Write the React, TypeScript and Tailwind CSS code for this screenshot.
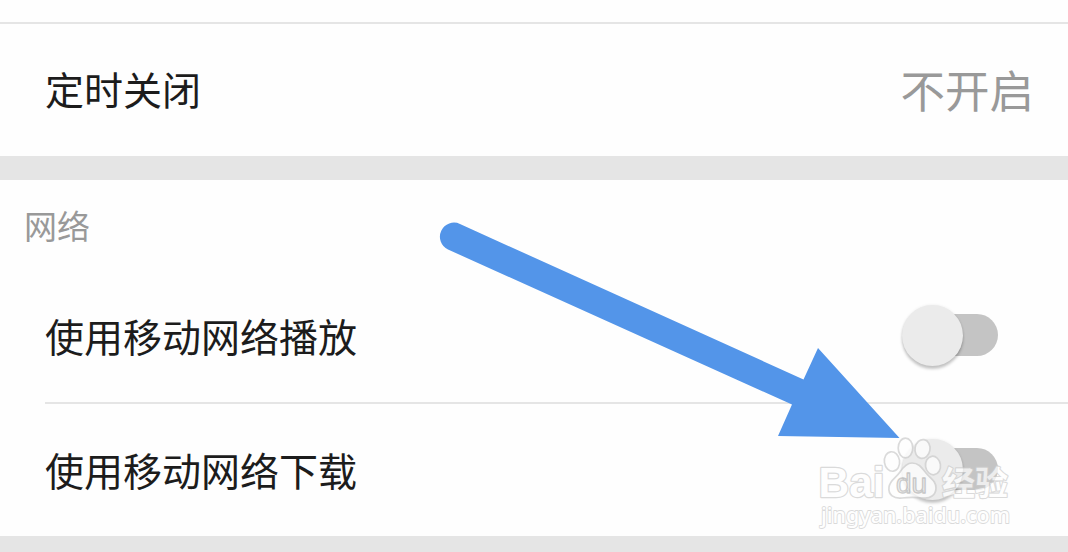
const Toggle = () => {
  return (
    <div className="relative w-24 h-[61px] flex items-center justify-end">
      <div className="w-[84px] h-[42px] rounded-full bg-[#c4c4c4]"></div>
      <div className="absolute left-0 top-0 size-[61px] rounded-full bg-[#ebebeb] shadow-[0_3px_3px_rgba(0,0,0,0.22),0_0_3px_rgba(0,0,0,0.08)]"></div>
    </div>
  );
};

const Arrow = () => {
  return (
    <svg className="absolute left-0 top-0 pointer-events-none" width="1068" height="552" viewBox="0 0 1068 552">
      <path
        d="M460 224 L803.500 379.500 L818 348 L899.500 438 L778 436 L792 404.500 L448 249.500 A13.800 13.800 0 0 1 460 224 Z"
        fill="#5395e9"
      />
    </svg>
  );
};

const Watermark = () => {
  return (
    <svg className="absolute left-[810px] top-[430px] pointer-events-none" width="210" height="110" viewBox="810 430 210 110">
      <g opacity="0.7" strokeLinejoin="round" fill="#ffffff" stroke="#cccccc">
        <g strokeWidth="1.700">
          <ellipse cx="892" cy="461.500" rx="7.600" ry="9.800" transform="rotate(-8 892 461.500)" />
          <ellipse cx="905.500" cy="448" rx="7.300" ry="9.800" />
          <ellipse cx="922.500" cy="449" rx="7.500" ry="9.500" transform="rotate(10 922.500 449)" />
          <ellipse cx="933" cy="465.500" rx="7.500" ry="9.300" transform="rotate(-8 933 465.500)" />
          <path d="M912 463 C919 463 922 468 926 473 C931 479 936 481 936 488 C936 495 930 499 923 498 C915 497 909 497 902 498 C894 499 888 495 889 487 C890 480 896 478 900 472 C904 466 907 463 912 463 Z" />
        </g>
        <text x="818.500" y="497" paintOrder="stroke" strokeWidth="2.400" fontFamily="Liberation Sans, sans-serif" fontWeight="700" fontSize="43" textLength="66" lengthAdjust="spacingAndGlyphs">Bai</text>
        <text x="942" y="494.500" paintOrder="stroke" strokeWidth="2.200" fontFamily="'Noto Sans CJK SC', sans-serif" fontWeight="700" fontSize="33" textLength="66" lengthAdjust="spacingAndGlyphs">经验</text>
        <text x="821" y="522.500" paintOrder="stroke" strokeWidth="1.800" fontFamily="'Noto Sans', sans-serif" fontWeight="500" fontSize="22.500" textLength="189" lengthAdjust="spacingAndGlyphs">jingyan.baidu.com</text>
        <text x="896" y="493" fill="#ececec" stroke="#b8b8b8" strokeWidth="1.300" fontFamily="Liberation Sans, sans-serif" fontSize="28" textLength="31" lengthAdjust="spacingAndGlyphs">du</text>
      </g>
    </svg>
  );
};

const App = () => {
  return (
    <div className="relative w-[1068px] h-[552px] overflow-hidden flex flex-col bg-[#fefefe] text-[#1c1c1c] text-[39px] leading-none font-['Noto_Sans_CJK_SC',sans-serif]">
      <div className="h-6 shrink-0 border-b-2 border-[#e5e5e5]"></div>
      <div className="h-[132px] shrink-0 flex items-center justify-between pl-[45px] pr-[34px]">
        <span className="pb-[3px]">定时关闭</span>
        <span className="pb-0.5 text-[44.500px] text-[#999999]">不开启</span>
      </div>
      <div className="h-6 shrink-0 bg-[#e5e5e5]"></div>

      <section className="h-[356px] shrink-0">
        <h2 className="h-[88px] pt-[29px] pl-6 text-[33px] leading-none font-normal text-[#999999]">网络</h2>
        <div className="ml-[45px] pr-[70px] h-[136px] border-b-2 border-[#e5e5e5] flex items-center justify-between">
          <span>使用移动网络播放</span>
          <Toggle />
        </div>
        <div className="ml-[45px] pr-[70px] pb-0.5 h-[132px] flex items-center justify-between">
          <span>使用移动网络下载</span>
          <Toggle />
        </div>
      </section>
      <div className="h-4 shrink-0 bg-[#e5e5e5]"></div>

      <Arrow />
      <Watermark />
    </div>
  );
};

export default App;
